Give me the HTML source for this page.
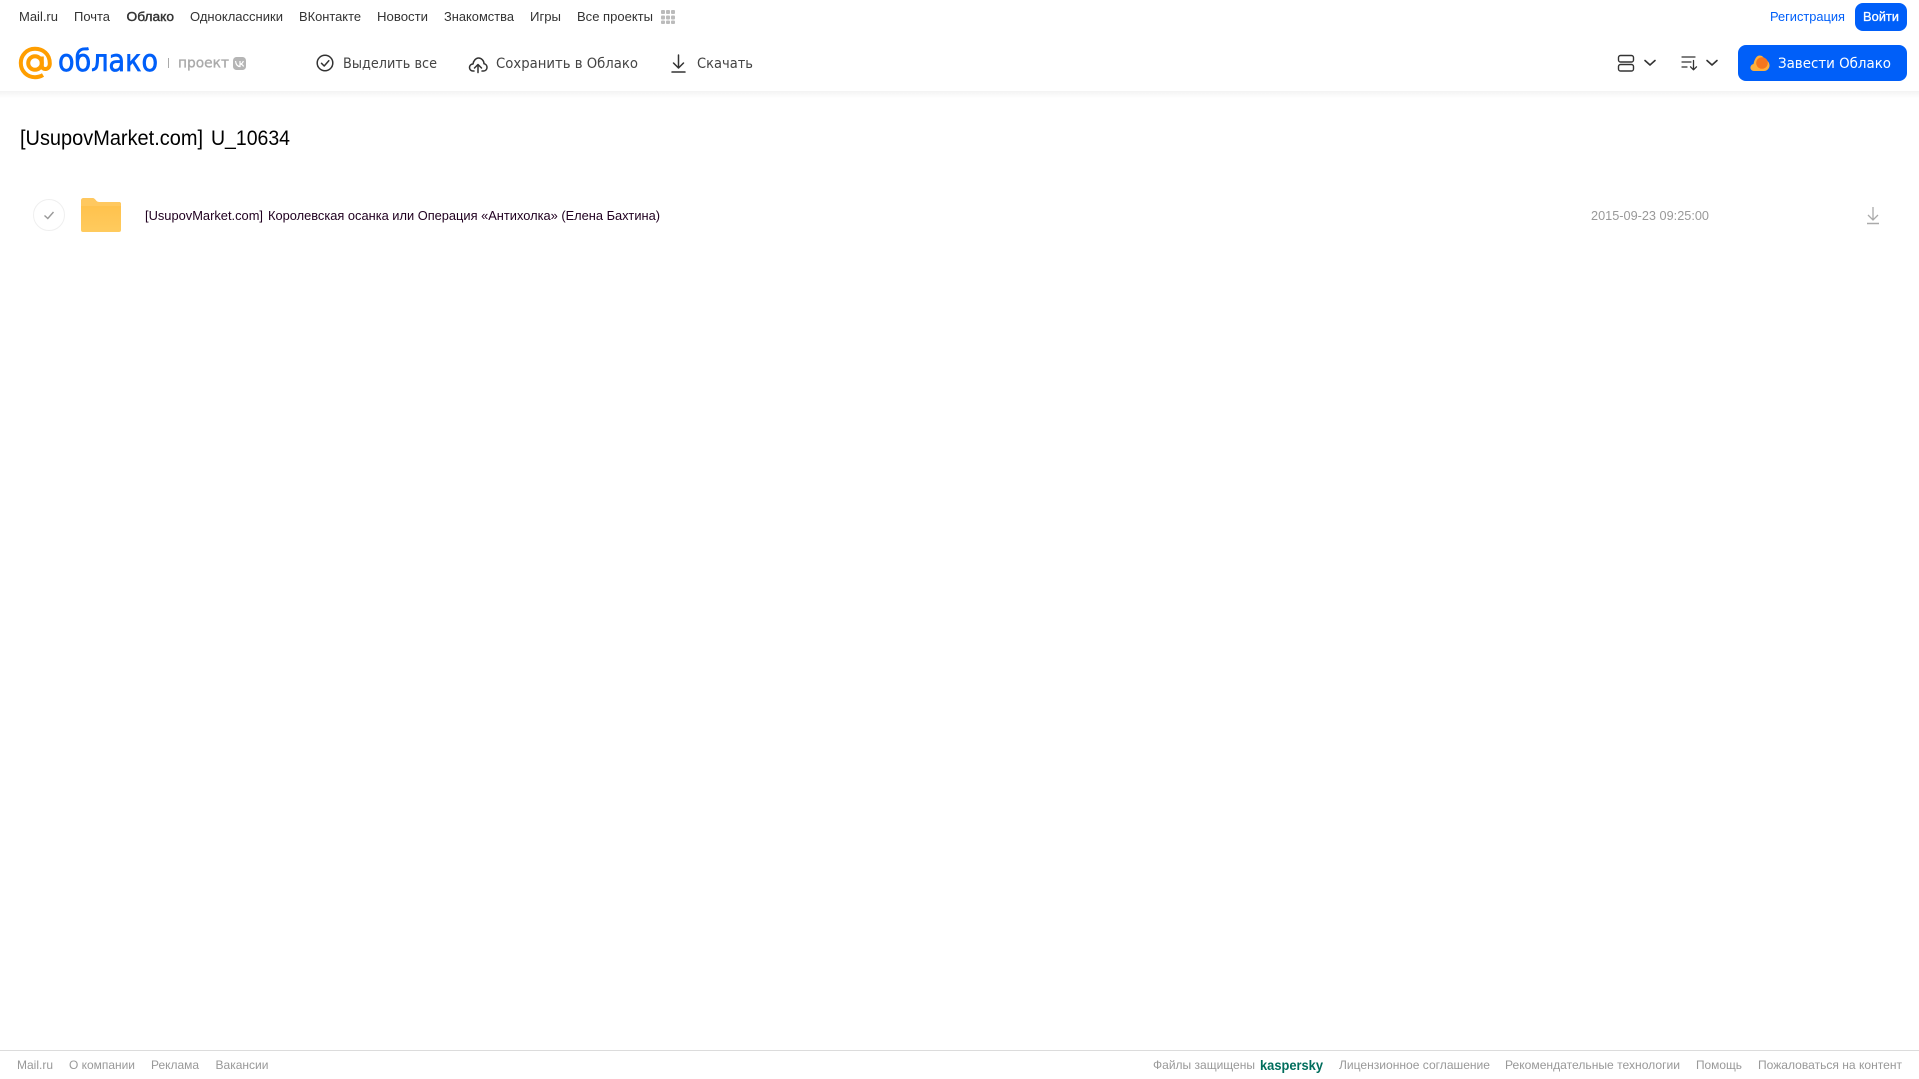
<!DOCTYPE html>
<html lang="ru">
<head>
<meta charset="utf-8">
<title>Облако</title>
<style>
html,body{margin:0;padding:0;width:1919px;height:1079px;overflow:hidden;background:#fff}
svg{display:block;position:absolute;left:0;top:0}
text{font-family:"Liberation Sans",Arial,sans-serif}
.n{font-size:13px;fill:#333}
.h{font-family:"DejaVu Sans",sans-serif;font-size:14px;fill:#444}
.f{font-size:12px;fill:#999}
</style>
</head>
<body>
<svg width="1919" height="1079" viewBox="0 0 1919 1079" xmlns="http://www.w3.org/2000/svg">
<defs>
<linearGradient id="sh" x1="0" y1="0" x2="0" y2="1"><stop offset="0" stop-color="#f3f3f3"/><stop offset="1" stop-color="#fff"/></linearGradient>
<linearGradient id="fo" x1="0" y1="0" x2="0" y2="1"><stop offset="0" stop-color="#ffbf48"/><stop offset="1" stop-color="#ffcb5e"/></linearGradient>
</defs>
<rect x="0" y="91" width="1919" height="7" fill="url(#sh)"/>

<!-- top nav -->
<text class="n" x="19" y="21" textLength="39" lengthAdjust="spacingAndGlyphs">Mail.ru</text>
<text class="n" x="74" y="21" textLength="36" lengthAdjust="spacingAndGlyphs">Почта</text>
<text class="n" x="126.500" y="21" textLength="47.500" lengthAdjust="spacingAndGlyphs" stroke="#333" stroke-width=".4">Облако</text>
<text class="n" x="190" y="21" textLength="93" lengthAdjust="spacingAndGlyphs">Одноклассники</text>
<text class="n" x="299" y="21" textLength="62" lengthAdjust="spacingAndGlyphs">ВКонтакте</text>
<text class="n" x="377" y="21" textLength="51" lengthAdjust="spacingAndGlyphs">Новости</text>
<text class="n" x="444" y="21" textLength="70" lengthAdjust="spacingAndGlyphs">Знакомства</text>
<text class="n" x="530" y="21" textLength="31" lengthAdjust="spacingAndGlyphs">Игры</text>
<text class="n" x="577" y="21" textLength="76" lengthAdjust="spacingAndGlyphs">Все проекты</text>
<g fill="#bbb">
<rect x="661" y="10" width="4" height="4" rx="1"/><rect x="666" y="10" width="4" height="4" rx="1"/><rect x="671" y="10" width="4" height="4" rx="1"/>
<rect x="661" y="15.500" width="4" height="4" rx="1"/><rect x="666" y="15.500" width="4" height="4" rx="1"/><rect x="671" y="15.500" width="4" height="4" rx="1"/>
<rect x="661" y="20.500" width="4" height="3.500" rx="1"/><rect x="666" y="20.500" width="4" height="3.500" rx="1"/><rect x="671" y="20.500" width="4" height="3.500" rx="1"/>
</g>
<text x="1770" y="21" font-size="13" fill="#005ff9" textLength="75" lengthAdjust="spacingAndGlyphs">Регистрация</text>
<rect x="1855" y="3" width="52" height="28" rx="8" fill="#005ff9"/>
<text x="1863" y="21" font-size="13" fill="#fff" stroke="#fff" stroke-width=".3" textLength="36" lengthAdjust="spacingAndGlyphs">Войти</text>

<!-- logo -->
<g fill="none" stroke="#ff9e00" stroke-width="4">
<circle cx="35" cy="63" r="6.800"/>
<path d="M41.800 56.500V65.500C41.800 70.500 49.800 70.500 49.800 63.500C49.800 54 43 48.800 35 48.800C26.500 48.800 20.800 55.500 20.800 63C20.800 71.500 27.500 77.200 35 77.200C38 77.200 40.500 76.500 43 75"/>
</g>
<text x="58" y="71" font-size="30" fill="#005ff9" stroke="#005ff9" stroke-width=".7" textLength="100" lengthAdjust="spacingAndGlyphs" style="font-family:'DejaVu Sans',sans-serif">облако</text>
<rect x="168" y="58" width="1" height="10" fill="#aaa"/>
<text x="178" y="67.500" font-size="14" fill="#aaa" stroke="#aaa" stroke-width=".35" textLength="51" lengthAdjust="spacingAndGlyphs" style="font-family:'DejaVu Sans',sans-serif">проект</text>
<rect x="233" y="57" width="13" height="13" rx="3.500" fill="#b5b5b5"/>
<path d="M235.500 61C236 64.800 237.500 66.500 240 66.500V61M240 64C241.500 64 242.800 63 243.300 61M240.500 64C242 64.300 243 65.300 243.600 66.500" fill="none" stroke="#fff" stroke-width="1.200"/>

<!-- actions -->
<g fill="none" stroke="#333" stroke-width="1.500" stroke-linecap="round" stroke-linejoin="round">
<circle cx="325" cy="63" r="7.800"/>
<path d="M321.500 63.300L324.200 66L328.800 60.700"/>
<path d="M474 71H473C470.500 71 469.500 69 469.500 67.500C469.500 65.500 471 64 473 64C473.500 60.500 476 58 478.500 58C481.500 58 484 60.800 484 63.800C485.800 64 487 65.500 487 67.500C487 69.500 485.500 71 483.500 71H482"/>
<path d="M478 72.500V64.500M474.500 68L478 64.500L481.500 68"/>
<path d="M678.500 55V68M673.500 63L678.500 68L683.500 63"/>
<path d="M672 72H685"/>
</g>
<text class="h" x="343" y="68" textLength="94" lengthAdjust="spacingAndGlyphs">Выделить все</text>
<text class="h" x="496" y="68" textLength="142" lengthAdjust="spacingAndGlyphs">Сохранить в Облако</text>
<text class="h" x="697" y="68" textLength="56" lengthAdjust="spacingAndGlyphs">Скачать</text>

<!-- right controls -->
<g fill="none" stroke="#333" stroke-width="1.400" stroke-linecap="round" stroke-linejoin="round">
<rect x="1618.500" y="55.500" width="15" height="6.500" rx="2"/>
<rect x="1618.500" y="64.500" width="15" height="6.500" rx="2"/>
<path d="M1645 60.500L1650 65L1655 60.500" stroke-width="1.600"/>
<path d="M1707 60.500L1712 65L1717 60.500" stroke-width="1.600"/>
<path d="M1682 57H1695M1682 62H1691M1682 67H1687" stroke-width="1.200"/>
<path d="M1693.500 60.500V69.500M1690.500 66.800L1693.500 69.800L1696.500 66.800" stroke-width="1.300"/>
</g>
<rect x="1738" y="45" width="169" height="36" rx="8" fill="#005ff9"/>
<path d="M1754 71C1751.500 71 1750 69 1750.500 66.800C1751 65.200 1752 64.300 1753.500 64C1754 61 1756 55.500 1759.500 55.500C1762 55.500 1764 57 1764.500 59.500C1767.500 60 1769.500 62.500 1769.500 65.500C1769.500 68.500 1767 71 1764 71Z" fill="#ffb03b"/>
<circle cx="1762" cy="63" r="5.800" fill="#f5761f"/>
<text x="1778" y="68" font-size="14" fill="#fff" textLength="113" lengthAdjust="spacingAndGlyphs" style="font-family:'DejaVu Sans',sans-serif">Завести Облако</text>

<!-- title -->
<text x="20" y="145" font-size="21" fill="#000" textLength="183" lengthAdjust="spacingAndGlyphs">[UsupovMarket.com]</text>
<text x="211" y="145" font-size="21" fill="#000" textLength="79" lengthAdjust="spacingAndGlyphs">U_10634</text>

<!-- row -->
<circle cx="49" cy="215" r="15.500" fill="#fff" stroke="#efefef" stroke-width="1"/>
<path d="M44.500 215.500L47.800 218.500L53.500 212" fill="none" stroke="#999" stroke-width="1.400"/>
<path d="M81 201C81 199 82 198 84 198H92C94 198 95 199 96 200.500C96.800 201.500 97.500 202 99 202H119C120.500 202 121 203 121 204.500V230C121 231.500 120 232 119 232H83C82 232 81 231.500 81 230Z" fill="url(#fo)"/>
<path d="M81 206H121V204.500C121 203 120.500 202 119 202H99C97.500 202 96.800 201.500 96 200.500C95 199 94 198 92 198H84C82 198 81 199 81 201Z" fill="#ffc85f"/>
<text x="145" y="220" font-size="12.500" fill="#200020" textLength="118" lengthAdjust="spacingAndGlyphs">[UsupovMarket.com]</text>
<text x="268" y="220" font-size="12.500" fill="#200020" textLength="392" lengthAdjust="spacingAndGlyphs">Королевская осанка или Операция «Антихолка» (Елена Бахтина)</text>
<text x="1591" y="220" font-size="12.500" fill="#999" textLength="118" lengthAdjust="spacingAndGlyphs">2015-09-23 09:25:00</text>
<g fill="none" stroke="#aaa" stroke-width="1.300">
<path d="M1873 207V220M1868 215L1873 220L1878 215"/>
<path d="M1867 223.500H1879" stroke-width="1.500"/>
</g>

<!-- footer -->
<rect x="0" y="1050" width="1919" height="1" fill="#dcdcdc"/>
<text class="f" x="17" y="1069" textLength="36" lengthAdjust="spacingAndGlyphs">Mail.ru</text>
<text class="f" x="69" y="1069" textLength="66" lengthAdjust="spacingAndGlyphs">О компании</text>
<text class="f" x="151" y="1069" textLength="48" lengthAdjust="spacingAndGlyphs">Реклама</text>
<text class="f" x="215.500" y="1069" textLength="53" lengthAdjust="spacingAndGlyphs">Вакансии</text>
<text class="f" x="1153" y="1069" textLength="102" lengthAdjust="spacingAndGlyphs">Файлы защищены</text>
<text x="1260" y="1070" font-size="13.500" font-weight="700" fill="#006d5c" textLength="63" lengthAdjust="spacingAndGlyphs">kaspersky</text>
<text class="f" x="1339" y="1069" textLength="151" lengthAdjust="spacingAndGlyphs">Лицензионное соглашение</text>
<text class="f" x="1505" y="1069" textLength="175" lengthAdjust="spacingAndGlyphs">Рекомендательные технологии</text>
<text class="f" x="1696" y="1069" textLength="46" lengthAdjust="spacingAndGlyphs">Помощь</text>
<text class="f" x="1758" y="1069" textLength="144" lengthAdjust="spacingAndGlyphs">Пожаловаться на контент</text>
</svg>
</body>
</html>
